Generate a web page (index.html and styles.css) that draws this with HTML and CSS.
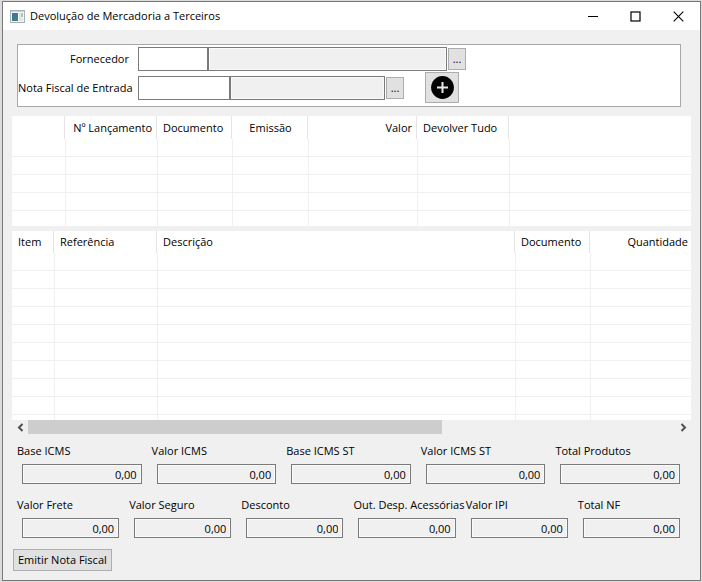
FILE: index.html
```html
<!DOCTYPE html>
<html lang="pt-BR">
<head>
<meta charset="utf-8">
<title>Devolução de Mercadoria a Terceiros</title>
<link rel="stylesheet" href="styles.css">
</head>
<body>
<div class="window">
  <header class="titlebar">
    <svg class="app-icon" width="15" height="13" viewBox="0 0 15 13" aria-hidden="true">
      <defs>
        <linearGradient id="pane" x1="0" y1="0" x2="1" y2="1">
          <stop offset="0" stop-color="#3f6fa8"/>
          <stop offset="1" stop-color="#3f8a6c"/>
        </linearGradient>
      </defs>
      <rect x=".5" y=".5" width="14" height="12" fill="#f4f6f7" stroke="#a9b0b5"/>
      <rect x="1" y="1" width="13" height="1" fill="#c9d0d5"/>
      <rect x="2" y="3" width="6" height="8" fill="url(#pane)"/>
      <rect x="9" y="3" width="2" height="8" fill="#dfe5e8"/>
      <rect x="11" y="3" width="2" height="4" fill="#a9c9bd"/>
      <rect x="11" y="8" width="2" height="3" fill="#dfe5e8"/>
    </svg>
    <h1 class="title">Devolução de Mercadoria a Terceiros</h1>
    <div class="window-buttons">
      <button type="button" aria-label="Minimizar"><svg width="11" height="11" viewBox="0 0 11 11"><path d="M1 5.5h10" stroke="#000"/></svg></button>
      <button type="button" aria-label="Maximizar"><svg width="11" height="11" viewBox="0 0 11 11"><rect x="1" y="1" width="9" height="9" fill="none" stroke="#000" stroke-width="1.2"/></svg></button>
      <button type="button" aria-label="Fechar"><svg width="11" height="11" viewBox="0 0 11 11"><path d="M.7.7l9.6 9.6M10.3.7L.7 10.3" stroke="#000" stroke-width="1.1"/></svg></button>
    </div>
  </header>

  <main class="content">
    <section class="filters">
      <div class="filter-row">
        <label for="fornecedor">Fornecedor</label>
        <input class="field code" id="fornecedor" type="text">
        <input class="field name" type="text" readonly aria-label="Nome do fornecedor">
        <button class="btn browse" type="button" aria-label="Procurar fornecedor">...</button>
      </div>
      <div class="filter-row">
        <label for="nota">Nota Fiscal de Entrada</label>
        <input class="field note" id="nota" type="text">
        <input class="field note-name" type="text" readonly aria-label="Descrição da nota">
        <button class="btn browse" type="button" aria-label="Procurar nota fiscal">...</button>
        <button class="btn add" type="button" aria-label="Adicionar">
          <svg width="23" height="23" viewBox="0 0 23 23"><circle cx="11.5" cy="11.5" r="11.4" fill="#000"/><path d="M11.5 6v11M6 11.5h11" stroke="#e8e8e8" stroke-width="2"/></svg>
        </button>
      </div>
    </section>

    <table class="grid notes">
      <colgroup><col class="w53"><col class="w92"><col class="w75"><col class="w76"><col class="w109"><col class="w92"><col></colgroup>
      <thead>
        <tr><th></th><th class="right">Nº Lançamento</th><th>Documento</th><th class="center">Emissão</th><th class="right">Valor</th><th>Devolver Tudo</th><th></th></tr>
      </thead>
      <tbody>
        <tr><td></td><td></td><td></td><td></td><td></td><td></td><td></td></tr>
        <tr><td></td><td></td><td></td><td></td><td></td><td></td><td></td></tr>
        <tr><td></td><td></td><td></td><td></td><td></td><td></td><td></td></tr>
        <tr><td></td><td></td><td></td><td></td><td></td><td></td><td></td></tr>
        <tr class="rest"><td></td><td></td><td></td><td></td><td></td><td></td><td></td></tr>
      </tbody>
    </table>

    <table class="grid items">
      <colgroup><col class="w42"><col class="w103"><col class="w358"><col class="w75"><col></colgroup>
      <thead>
        <tr><th>Item</th><th>Referência</th><th>Descrição</th><th>Documento</th><th class="right edge">Quantidade</th></tr>
      </thead>
      <tbody>
        <tr><td></td><td></td><td></td><td></td><td></td></tr>
        <tr><td></td><td></td><td></td><td></td><td></td></tr>
        <tr><td></td><td></td><td></td><td></td><td></td></tr>
        <tr><td></td><td></td><td></td><td></td><td></td></tr>
        <tr><td></td><td></td><td></td><td></td><td></td></tr>
        <tr><td></td><td></td><td></td><td></td><td></td></tr>
        <tr><td></td><td></td><td></td><td></td><td></td></tr>
        <tr><td></td><td></td><td></td><td></td><td></td></tr>
        <tr><td></td><td></td><td></td><td></td><td></td></tr>
        <tr class="rest"><td></td><td></td><td></td><td></td><td></td></tr>
      </tbody>
    </table>
    <div class="scrollbar">
      <button type="button" aria-label="Rolar para a esquerda"><svg width="7" height="9" viewBox="0 0 7 9"><path d="M5.5 1L2 4.5L5.5 8" fill="none" stroke="#505050" stroke-width="2"/></svg></button>
      <div class="track"><div class="thumb"></div></div>
      <button type="button" aria-label="Rolar para a direita"><svg width="7" height="9" viewBox="0 0 7 9"><path d="M1.5 1L5 4.5L1.5 8" fill="none" stroke="#505050" stroke-width="2"/></svg></button>
    </div>

    <section class="totals five">
      <div class="total"><label for="t1">Base ICMS</label><input class="field" id="t1" type="text" value="0,00" readonly></div>
      <div class="total"><label for="t2">Valor ICMS</label><input class="field" id="t2" type="text" value="0,00" readonly></div>
      <div class="total"><label for="t3">Base ICMS ST</label><input class="field" id="t3" type="text" value="0,00" readonly></div>
      <div class="total"><label for="t4">Valor ICMS ST</label><input class="field" id="t4" type="text" value="0,00" readonly></div>
      <div class="total"><label for="t5">Total Produtos</label><input class="field" id="t5" type="text" value="0,00" readonly></div>
    </section>
    <section class="totals six">
      <div class="total"><label for="t6">Valor Frete</label><input class="field" id="t6" type="text" value="0,00" readonly></div>
      <div class="total"><label for="t7">Valor Seguro</label><input class="field" id="t7" type="text" value="0,00" readonly></div>
      <div class="total"><label for="t8">Desconto</label><input class="field" id="t8" type="text" value="0,00" readonly></div>
      <div class="total"><label for="t9">Out. Desp. Acessórias</label><input class="field" id="t9" type="text" value="0,00" readonly></div>
      <div class="total"><label for="t10">Valor IPI</label><input class="field" id="t10" type="text" value="0,00" readonly></div>
      <div class="total"><label for="t11">Total NF</label><input class="field" id="t11" type="text" value="0,00" readonly></div>
    </section>

    <button class="btn issue" type="button">Emitir Nota Fiscal</button>
  </main>
</div>
</body>
</html>
```
FILE: styles.css
```css
* {
  box-sizing: border-box;
}

body {
  margin: 0;
  padding: 1px 1px 1px 2px;
  min-height: 100vh;
  display: flex;
  background: #dcdcdc;
  color: #000;
  font: 11px/16px "Open Sans", "Noto Sans", sans-serif;
}

button,
input {
  margin: 0;
  padding: 0;
  border-radius: 0;
  font: inherit;
  color: inherit;
}

svg {
  display: block;
}

.window {
  flex: 1;
  min-width: 0;
  border: 1px solid #777;
  background: #f0f0f0;
}

.titlebar {
  display: flex;
  align-items: center;
  height: 28px;
  padding-left: 7px;
  background: #fff;
}

.title {
  flex: 1;
  margin: 0 0 0 5px;
  font-size: 11px;
  font-weight: 400;
}

.window-buttons {
  display: flex;
}

.window-buttons button {
  display: flex;
  align-items: center;
  justify-content: center;
  width: 43px;
  height: 28px;
  border: 0;
  background: none;
}

.content {
  padding: 14px 9px 8px;
}

.filters {
  display: flex;
  flex-direction: column;
  margin: 0 10px 9px 5px;
  padding: 2px 0;
  border: 1px solid #a8a8ac;
  background: #fff;
}

.filter-row {
  display: flex;
  align-items: center;
  height: 24px;
}

.filter-row + .filter-row {
  height: 33px;
}

.filter-row label {
  width: 111px;
  margin-right: 9px;
  text-align: right;
  white-space: nowrap;
}

.field {
  height: 24px;
  border: 1px solid #7a7a7a;
  background: #fff;
}

.field[readonly] {
  background: #f0f0f0;
  box-shadow: inset 0 0 0 1px #fafafa;
}

.code {
  width: 70px;
}

.name {
  width: 239px;
}

.note {
  width: 92px;
}

.note-name {
  width: 155px;
}

.btn {
  border: 1px solid #adadad;
  background: #e1e1e1;
}

.browse {
  width: 18px;
  height: 22px;
  margin-left: 1px;
}

.add {
  display: flex;
  align-items: center;
  justify-content: center;
  width: 34px;
  height: 31px;
  margin-left: 21px;
}

.grid {
  width: 100%;
  table-layout: fixed;
  border-collapse: separate;
  border-spacing: 0;
  background: #fff;
}

.notes {
  margin-bottom: 5px;
}

.w42 { width: 42px; }
.w53 { width: 53px; }
.w75 { width: 75px; }
.w76 { width: 76px; }
.w92 { width: 92px; }
.w103 { width: 103px; }
.w109 { width: 109px; }
.w358 { width: 358px; }

.grid th {
  height: 23px;
  padding: 0 4px 0 6px;
  border-right: 1px solid #e5e5e5;
  font-weight: 400;
  text-align: left;
  white-space: nowrap;
}

.items th {
  height: 22px;
}

.grid th:last-child {
  border-right: 0;
}

.grid .right {
  text-align: right;
}

.grid .center {
  text-align: center;
}

.grid .edge {
  padding-right: 3px;
}

.grid td {
  height: 18px;
  padding: 0;
  border-bottom: 1px solid #f0f0f0;
}

.grid td + td {
  border-left: 1px solid #f0f0f0;
}

.grid .rest td {
  height: 15px;
  border-bottom: 0;
}

.items .rest td {
  height: 5px;
}

.scrollbar {
  display: flex;
  height: 14px;
}

.scrollbar button {
  display: flex;
  align-items: center;
  justify-content: center;
  width: 16px;
  border: 0;
  background: none;
}

.track {
  flex: 1;
}

.thumb {
  width: 64%;
  height: 14px;
  background: #cdcdcd;
}

.totals {
  display: grid;
  margin: 9px 1px 0 5px;
}

.five {
  grid-template-columns: repeat(5, 1fr);
}

.six {
  grid-template-columns: repeat(6, 1fr);
  margin-top: 13px;
}

.total {
  display: flex;
  flex-direction: column;
  gap: 5px;
  min-width: 0;
}

.total label {
  white-space: nowrap;
}

.total .field {
  height: 20px;
  min-width: 0;
  margin: 0 10px 0 5px;
  padding-right: 4px;
  text-align: right;
}

.issue {
  display: block;
  height: 22px;
  margin: 11px 0 0 1px;
  padding: 0 4px;
}
```
